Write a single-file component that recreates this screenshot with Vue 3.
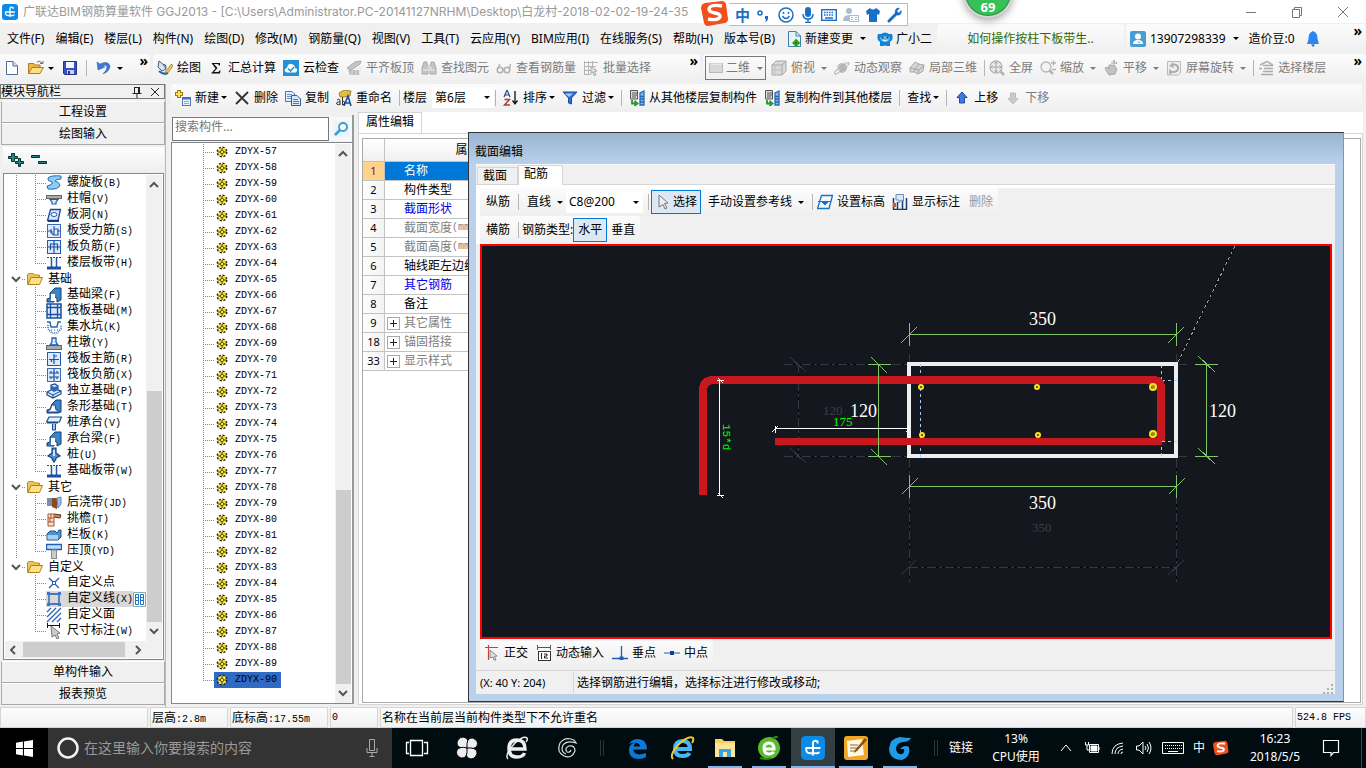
<script setup>
import { ref } from 'vue'

const icons = {
  app: '<rect width="16" height="16" rx="3" fill="#0b8ae6"/><path d="M11 5V3.500Q9 2.500 8 4V13M3 8H13M3.500 8Q3 11.500 6 11.500H11Q12 11.500 12 10.500" fill="none" stroke="#fff" stroke-width="1.300"/>',
  sogou: '<path d="M4 3L21 1Q24 1 25 4L27 19Q27 22 24 23L7 26Q4 26 3 23L0 8Q0 4 4 3Z" fill="#f2501b"/><path d="M21 6Q9 4 8 9Q8 12 14 13Q20 14 19 17Q17 21 7 19" fill="none" stroke="#fff" stroke-width="3.400"/>',
  punct: '<circle cx="4" cy="6" r="2" fill="none" stroke="#1a6fc4" stroke-width="1.500"/><path d="M9 9h3v3q0 2-3 3q1-2 1-3h-1z" fill="#1a6fc4"/>',
  smile: '<circle cx="8" cy="8" r="7" fill="none" stroke="#1a6fc4" stroke-width="1.500"/><path d="M4.500 9Q8 14 11.500 9M5.500 5v2M10.500 5v2" fill="none" stroke="#1a6fc4" stroke-width="1.500"/>',
  mic: '<rect x="5" y="0" width="6" height="10" rx="3" fill="#1a6fc4"/><path d="M3 7Q3 12 8 12Q13 12 13 7M8 12V15M5 15.500H11" fill="none" stroke="#1a6fc4" stroke-width="1.500"/>',
  keys: '<rect x=".7" y="2.700" width="14.600" height="10.600" fill="none" stroke="#1a6fc4" stroke-width="1.400"/><path d="M3 5.500H13M3 8H13" stroke="#1a6fc4" stroke-width="1.500" stroke-dasharray="1.500 1"/><path d="M4 11H12" stroke="#1a6fc4" stroke-width="1.500"/>',
  person: '<circle cx="6" cy="4" r="3" fill="#a9bdd3"/><path d="M0 14Q0 8 6 8Q9 8 10 9H6V14Z" fill="#a9bdd3"/><rect x="6.500" y="8.500" width="9" height="6" fill="#fff" stroke="#a9bdd3"/><path d="M8 10.500h2M12 10.500h2M8 12.500h2M12 12.500h2" stroke="#a9bdd3"/>',
  shirt: '<path d="M5 1L1 4L2 8L4 7V15H12V7L14 8L15 4L11 1Q8 4 5 1Z" fill="#1a6fc4"/>',
  wrench: '<path d="M2 14L9 7" stroke="#1a6fc4" stroke-width="3" stroke-linecap="round"/><path d="M14 3L12 6L10 4L13 1Q9 0 8 4Q7 8 11 8.500Q15 8 14.500 3.500Z" fill="#1a6fc4"/>',
  newdoc: '<path d="M2.500.5H10L14.500 5V15.500H2.500Z" fill="#e8f4fd" stroke="#3d7fae"/><path d="M10 .5V5H14.500" fill="none" stroke="#3d7fae"/><path d="M10 7.500L14.500 12L10 16L6 12Z" fill="#4fae1f"/><path d="M10 9V15M7 12H13" stroke="#1f7a0b"/>',
  robot: '<path d="M1 3L4 3Q8 0 12 3L15 3Q17 9 13 11V15H9L8 14L7 15H3V11Q-1 9 1 3Z" fill="#0f83d6"/><path d="M3 6Q8 4 13 6Q13 11 8 11Q3 11 3 6Z" fill="#5bb6f2"/><path d="M5.500 5.500V7.500M10.500 5.500V7.500" stroke="#053a70" stroke-width="1.500"/><path d="M5.500 9Q8 11 10.500 9" stroke="#fff" fill="none"/>',
  user: '<rect width="16" height="16" rx="2" fill="#4a9cd3"/><circle cx="8" cy="5.500" r="3" fill="#fff"/><path d="M3 13Q3 9 8 9Q13 9 13 13Z" fill="#fff"/><path d="M8 12L9 10L10 12Z" fill="#4a9cd3"/>',
  bell: '<path d="M8 0Q3 2 3.500 8L2 13H14L12.500 8Q13 2 8 0Z" fill="#2b87f0"/><path d="M6 13.500H10L8 16Z" fill="#1b5fb8"/>',
  doc: '<path d="M2.500 1.500H9L13.500 6V14.500H2.500Z" fill="#fdfefe" stroke="#4a6d9c"/><path d="M9 1.500V6H13.500" fill="#cfe0f3" stroke="#4a6d9c"/>',
  open: '<path d="M.5 13.500V3.500H6L7 5H12V8" fill="#e8b94a" stroke="#b07c1c"/><path d="M.5 13.500L4 7.500H15.500L12 13.500Z" fill="#ffdf80" stroke="#b07c1c"/><path d="M9 2Q12 0 14 3M12 3.500H15V1" fill="none" stroke="#5b7486"/>',
  save: '<path d="M1.500 1.500H14.500V14.500H2.500L1.500 13.500Z" fill="#3c4fc0" stroke="#28338c"/><rect x="4" y="2" width="8" height="6" fill="#f3f5ff"/><rect x="5" y="10" width="7" height="4" fill="#c9d0f2"/><rect x="6" y="11" width="2" height="3" fill="#28338c"/>',
  undo: '<path d="M2 2L3 10L10 7L7.500 6Q11 4 12 7Q12 10 8 14Q15 11 15 6Q13 0 5 4Z" fill="#3c78d4" stroke="#2a57a8" stroke-width=".5"/>',
  draw: '<path d="M2 1L7 5L9 9L5 11L1 7Z" fill="#d6e3f1" stroke="#3b5d85"/><path d="M6 5Q9 3 9 8" fill="none" stroke="#3b5d85"/><path d="M14.500 4L8 12L7 15L10 14L16 6Z" fill="#f4c542" stroke="#7a5d17" stroke-width=".6"/><path d="M2 11Q6 15 11 13" stroke="#2c66b8" stroke-width="2" fill="none"/>',
  sigma: '<path d="M3.500 3H12V5.500H11Q11 4 9 4H6L9.500 8L6 12H9.500Q11 12 11.500 10.500H12.500L12 13.500H3L7.500 8.500Z" fill="#111"/>',
  cloud: '<rect width="16" height="16" fill="#2391d8"/><path d="M4 12.500Q1 12 2 9Q3 8 4 8Q5 3 9 4Q12 5 12 8Q15 8.500 14 11Q13 12.500 12 12.500Z" fill="#fff"/><path d="M5 8.500L7.500 11L11 7" fill="none" stroke="#2391d8" stroke-width="1.600"/>',
  align: '<path d="M1 8L9 2L15 1L14 4L5 10Z" fill="#c5c5c5" stroke="#aaa"/><path d="M2 10H13V15H4Z" fill="#bbb"/><path d="M6 11V15M10 8V15M14 6V15" stroke="#e5e5e5"/>',
  binoc: '<path d="M3 2H6V5H7V14H1V8ZM10 2H13L15 8V14H9V5H10Z" fill="#c4c4c4" stroke="#a8a8a8"/><path d="M6 7H10V10H6M2 10H6M10 10H14" stroke="#eee" fill="none"/>',
  glasses: '<circle cx="4" cy="10" r="2.800" fill="none" stroke="#b0b0b0" stroke-width="1.500"/><circle cx="11" cy="10" r="2.800" fill="none" stroke="#b0b0b0" stroke-width="1.500"/><path d="M1.500 9L4 4M13.500 9L14.500 4M6.500 9.500H8.500" stroke="#b0b0b0" stroke-width="1.300"/>',
  batch: '<path d="M1.500 1V15M5.500 1V15M9.500 1V9M1 2.500H15M1 6.500H13M1 10.500H8M1 14.500H8" stroke="#b4b4b4" fill="none"/><path d="M8 6L14 11L11.500 11.500L13 15L11 15.500L10 12L8 13.500Z" fill="#ddd" stroke="#aaa"/>',
  flat: '<rect x="1.500" y="3.500" width="13" height="9" fill="#d8d8d8" stroke="#b8b8b8"/><path d="M2 4H14" stroke="#f3f3f3"/>',
  cube: '<path d="M1 5L5 1H15V11L11 15H1Z" fill="#d9d9d9" stroke="#a8a8a8"/><path d="M1 5H11V15M11 5L15 1" fill="none" stroke="#a8a8a8"/><path d="M4 5V15M1 10H11" stroke="#c1c1c1"/>',
  orbit: '<circle cx="8" cy="8" r="5" fill="#bdbdbd"/><path d="M1 14Q-1 11 8 6Q15 1 15 3Q15 6 8 10Q2 15 1 14Z" fill="none" stroke="#a5a5a5"/><path d="M10 1Q14 2 13 6M4 5Q3 9 6 13" stroke="#dedede" fill="none"/>',
  local: '<path d="M1 8L6 2L10 4L15 5L14 11L9 14L5 12L1 12Z" fill="#d5d5d5" stroke="#aaa"/><path d="M1 8L6 9L10 4M6 9L5 12M6 9L10 10L15 5M10 10L9 14" stroke="#a5a5a5" fill="none"/>',
  full: '<circle cx="7" cy="7" r="6" fill="#ececec" stroke="#b3b3b3" stroke-width="1.300"/><path d="M7 2V12M2 7H12M5.500 3.500L7 2L8.500 3.500M5.500 10.500L7 12L8.500 10.500M3.500 5.500L2 7L3.500 8.500M10.500 5.500L12 7L10.500 8.500" fill="none" stroke="#a4a4a4"/><path d="M11 11L15 15" stroke="#b3b3b3" stroke-width="2.500"/>',
  zoom: '<circle cx="6" cy="7" r="5" fill="#f3f3f3" stroke="#b8b8b8" stroke-width="1.300"/><path d="M9.500 10.500L13 14" stroke="#b3b3b3" stroke-width="2.500"/><path d="M11 3H16M13.500 .5V5.500M12 9.500H16" stroke="#b3b3b3" stroke-width="1.300"/>',
  pan: '<path d="M2 8L5 7L6 9V5L8 5L12 6L14 9L12 14L6 15L4 12Z" fill="#c2c2c2" stroke="#a9a9a9"/><path d="M11 0V6M8 3H14M10 1.500L11 0L12 1.500M13 2L14 3L13 4" stroke="#aaa" fill="none"/>',
  rotate: '<path d="M1.500 1.500H14.500V13L12 15H1.500Z" fill="#eee" stroke="#bbb"/><path d="M4 12Q13 13 12 7Q10 3 5 5" fill="none" stroke="#a8a8a8" stroke-width="1.800"/><path d="M7 2L3 6L8 8ZM3 9V15L8 12Z" fill="#b1b1b1"/>',
  floors: '<path d="M2 5L9 1.500L15 5M5 5.500H15M1 8.500H4M6 8.500H15M5 11.500H15M3 14.500H15" stroke="#ababab" stroke-width="1.400" fill="none"/>',
  create: '<path d="M4 0V8M0 4H8" stroke="#9a7a10" stroke-width="4"/><path d="M4 1V7M1 4H7" stroke="#ffe15a" stroke-width="2"/><rect x="7.500" y="7.500" width="8" height="8" fill="#eef4ff" stroke="#4c78bd"/><path d="M7.500 8.500H15.500" stroke="#3c6fc4" stroke-width="2"/><path d="M9 11.500H14M9 13.500H14" stroke="#8ca9d8"/>',
  remove: '<path d="M2 2L14 14M14 2L2 14" stroke="#333" stroke-width="1.800"/>',
  copy: '<path d="M.5 1.500H7L9.500 4V11.500H.5Z" fill="#e6effb" stroke="#4974b5"/><path d="M2 4.500H7M2 6.500H7M2 8.500H6" stroke="#6a95cf"/><path d="M6.500 5.500H12L15.500 9V15.500H6.500Z" fill="#dce9fb" stroke="#335da1"/><path d="M8 9.500H13M8 11.500H14M8 13.500H14" stroke="#4b7cc0"/>',
  rename: '<path d="M3 3L8 0L15 1L14 6L8 7L4 7Z" fill="#e9bd3c" stroke="#856213" stroke-width=".7"/><path d="M8 16L12 6L15 16M9.500 13H14" fill="none" stroke="#1c4fa6" stroke-width="1.600"/><path d="M1 10Q4 8 4 11V15M4 12Q0 11.500 0.700 14Q2 15.500 4 14M6.500 7V15Q9 15 8.500 12Q8 10.500 6.500 11.500" fill="none" stroke="#333"/>',
  sort: '<path d="M1 7L4 0L7 7M2 5H6" fill="none" stroke="#27488c" stroke-width="1.200"/><path d="M1.500 9.500H6.500L1.500 15H7" fill="none" stroke="#b23a3a" stroke-width="1.400"/><path d="M12 1V13M9.500 10.500L12 14L14.500 10.500" fill="none" stroke="#111" stroke-width="1.300"/>',
  filter: '<path d="M1 2H15L9.500 8V14L6.500 13V8Z" fill="#2f6fd0" stroke="#1d4d9c"/><path d="M3 3.500H11L7 7" fill="#a9cbf5"/>',
  floorcopy: '<path d="M1.500.5H8.500V9H1.500Z" fill="#ddd" stroke="#555"/><path d="M3 3H8M3 5H8M3 7H7" stroke="#555"/><path d="M15 1L11 3V15H15ZM11 6.500H15M11 9H15M11 12H15" fill="#8db9ea" stroke="#2769b3" stroke-width="1.300"/><path d="M3 10V13.500H7M5.500 11L8.500 13.500L5.500 16" stroke="#1c9a2a" stroke-width="1.800" fill="none"/>',
  up: '<path d="M8 2L13 7.500H10.500V13H5.500V7.500H3Z" fill="#3c7be0" stroke="#1d469c"/>',
  down: '<path d="M8 14L13 8.500H10.500V3H5.500V8.500H3Z" fill="#cacaca" stroke="#bdbdbd"/>',
  search: '<path d="M0 0H16V16H0Z" fill="#e9f4fc"/><circle cx="10" cy="6" r="4" fill="#fff" stroke="#3d97d3" stroke-width="1.800"/><path d="M7 9L2 14" stroke="#3d97d3" stroke-width="2.500"/>',
  folder: '<path d="M.5 13.500V3.500L2 2.500H6.500L7.500 4H12.500V7" fill="#f1c552" stroke="#b98a26"/><path d="M1 13.500L4 6.500H15.500L12.500 13.500Z" fill="#ffe08a" stroke="#b07f1f"/>',
  spiral: '<path d="M15 1Q5 0 2 3Q1 6 6 7Q8 9 1 11L2 14Q13 15 14 10Q13 7 9 6Q10 4 15 4Z" fill="#8ecbf5" stroke="#1f6fb8"/>',
  cap: '<rect x=".5" y="4.500" width="15" height="3" fill="#aaa" stroke="#666"/><path d="M4 8.500H12L10 11V13H6V11Z" fill="#dcebff" stroke="#1a5bb5" stroke-width="1.200"/>',
  hole: '<path d="M4.500 2.500H14.500L12 13.500H1.500Z" fill="#dbe9fb" stroke="#164a9d" stroke-width="1.300"/><ellipse cx="8" cy="7.500" rx="3" ry="2" fill="#fff" stroke="#1a5bb5"/><path d="M2 14H13" stroke="#123a7c" stroke-width="2"/>',
  slabS: '<rect x="1.500" y="1.500" width="13" height="13" fill="#e2ecfb" stroke="#3a6bb8"/><path d="M2 8H5M11 8H14M5 6V10M8 12Q5 11 6 8M8 3V12H12V6H8" fill="none" stroke="#2458a8" stroke-width="1.200"/>',
  slabF: '<rect x="1.500" y="1.500" width="13" height="13" fill="#dce9fb" stroke="#225ab0"/><path d="M8 2V14M4.500 11V5H11.500V11M2 8H14" fill="none" stroke="#1c4f9e" stroke-width="1.200"/>',
  band: '<path d="M1 2.500H15" stroke="#1c4f9e" stroke-dasharray="2 1"/><path d="M1 13H15" stroke="#1c4f9e" stroke-width="3"/><path d="M5.500 3V12M10.500 3V12" stroke="#2458a8" stroke-width="1.500"/>',
  beam: '<path d="M1 15V12L4 11V6L9 1L15 1V13L11 15V11L8 10V15Z" fill="#3c83c5" stroke="#0f3f80"/><path d="M5 7H9V14H5Z" fill="#fff"/>',
  raft: '<rect x="1" y="1" width="14" height="14" fill="#dce9fb" stroke="#1c4f9e" stroke-width="1.500"/><path d="M4.500 1V15M11.500 1V15M1 4.500H15M1 11.500H15" stroke="#1c4f9e" stroke-width="1.300"/>',
  pit: '<path d="M1 3H4L5 8H11L12 3H15" fill="none" stroke="#2563b3" stroke-width="1.400"/><path d="M2 6V10L6 14H11L15 10V6" fill="none" stroke="#2563b3" stroke-dasharray="1 1" stroke-width="1.600"/><path d="M5 11H12" stroke="#2563b3" stroke-dasharray="1 2"/>',
  pier: '<rect x=".5" y="10.500" width="15" height="4" fill="#aaa" stroke="#666"/><path d="M4 10L6 7V3H10V7L12 10Z" fill="#dcebff" stroke="#1a5bb5" stroke-width="1.300"/>',
  rebar: '<rect x="1.500" y="1.500" width="13" height="13" fill="#dce9fb" stroke="#225ab0"/><path d="M3 8.500H13M5.500 8V11M8 3V13M8 5H11" fill="none" stroke="#1c4f9e" stroke-width="1.200"/>',
  rebarX: '<rect x="1.500" y="1.500" width="13" height="13" fill="#dce9fb" stroke="#3a6bb8"/><path d="M8 2V14M3 6H13M3 10H13M5 4V6M11 4V6M5 10V12M11 10V12" stroke="#1c4f9e" stroke-width="1.200"/>',
  found: '<path d="M5 2L9 1L12 3V7L15 8V11L7 15L1 12V9L5 7Z" fill="#d8e8fa" stroke="#14498f" stroke-width="1.200"/><path d="M8 4V9L12 7V3ZM5 2L8 4V9L5 7Z" fill="#2b6cb5"/><path d="M1 9L7 12L15 8M7 12V15" fill="none" stroke="#14498f"/>',
  strip: '<path d="M1 14V11L4 10L6 5L10 1H15V13L12 14Z" fill="#3c83c5" stroke="#0f3f80"/><path d="M2 13V11H4L6 6H9L10 11H12V13Z" fill="#fff" stroke="#14498f"/>',
  pile: '<path d="M3 2H15.500L13.500 7H.5Z" fill="#e3effc" stroke="#14498f" stroke-width="1.200"/><path d="M1 7H12V8.500H1Z" fill="#14498f"/><path d="M6.500 9V15H9.500V9" fill="#9cc5ef" stroke="#14498f"/>',
  stake: '<path d="M6 1H10V6L14 9L10 11V12L8 15L6 12V11L2 9L6 6Z" fill="#4d8fd0" stroke="#0f4186" stroke-width="1.200"/><path d="M8 3V9" stroke="#fff" stroke-width="1.500"/>',
  pour: '<rect x="1" y="3" width="5" height="8" fill="#7b8fa8"/><path d="M6 3H11V14L6 12Z" fill="#8a4a23"/><path d="M11 3L15 2V9L12 13Z" fill="#9cc1ea" stroke="#5f86b4"/>',
  eave: '<path d="M2 3H8V15H2ZM2 7H8M2 11H8M5 3V7M4 7V11" fill="#f9e0d0" stroke="#a9522b"/><path d="M8 3L15 4L14 7L8 6" fill="#c98a66" stroke="#613217"/>',
  rail: '<path d="M1 7L4 4H9L11 6L13 3H15V10L12 13H1Z" fill="#4b94cf" stroke="#1a5487"/><path d="M1.500 8H12V12.500H1.500Z" fill="#a9d1ee"/>',
  top: '<path d="M.5 1.500H15.500V6.500H.5Z" fill="#bfe0ff" stroke="#1c5fb2" stroke-width="1.300"/><rect x="5.500" y="7" width="5" height="8.500" fill="#ccc" stroke="#888"/>',
  point: '<path d="M3 3L13 13M13 3L3 13" stroke="#2060b4" stroke-width="1.300"/><path d="M6 6H10V10H6Z" fill="#2060b4"/><path d="M7 7H9V9H7Z" fill="#fff"/>',
  line: '<path d="M3 3H13V13H3Z" fill="none" stroke="#1c57b0" stroke-width="1.300"/><path d="M1 1H4V4H1ZM12 1H15V4H12ZM1 12H4V15H1ZM12 12H15V15H12Z" fill="#3a76cc"/>',
  face: '<path d="M1 5L5 1M1 10L10 1M1 15L15 1M6 15L15 6M11 15L15 11" stroke="#2b62b5" stroke-width="1.300"/>',
  measure: '<path d="M1.500 0V5M13.500 0V5M1 2.500H14" stroke="#111"/><path d="M5 3L14 10L11 11L13 15L11 16L9 12L6 14Z" fill="#ccc" stroke="#777"/>',
  gear: '<circle cx="6" cy="6" r="4.500" fill="#ffee2c" stroke="#222" stroke-width="2" stroke-dasharray="2 1.530"/><circle cx="6" cy="6" r="3.300" fill="none" stroke="#ffee2c" stroke-width="1.200"/><path d="M6 2V10M2 6H10" stroke="#333" stroke-width="1"/><circle cx="6" cy="6" r="1.700" fill="#ffee2c" stroke="#333" stroke-width=".8"/>',
  select: '<path d="M4 1L13 9L9.500 9.500L12 14L10 15L8 10.500L4 13Z" fill="#eee" stroke="#777"/>',
  level: '<path d="M4.500 1.500H15.500L12 14.500H.5Z" fill="none" stroke="#1773c7" stroke-width="1.300"/><path d="M1 7.500H14M5 8L8 11L11 8Z" fill="#1773c7" stroke="#1773c7"/>',
  note: '<path d="M1.500 4V15.500H14.500V4M5.500 8V15M10.500 7V15" fill="none" stroke="#153f72" stroke-width="1.500"/><path d="M4 .5H11.500V7L9 6L7 9V6H4Z" fill="#dbe8f8" stroke="#6c8db5"/><path d="M1 9H4V13H1Z" fill="#d3562f"/>',
  ortho: '<path d="M1 2.500H14M4.500 0V15" stroke="#c2423c" stroke-width="1.200"/><path d="M6 5L13 11L10.500 11.500L12 15L10 15L9 12L6 13Z" fill="#ddd" stroke="#888"/>',
  dyn: '<path d="M1 2.500H15M1.500 0V5M14.500 0V5" stroke="#555"/><rect x="2.500" y="6.500" width="12" height="9" fill="#fff" stroke="#333"/><path d="M5.500 8V14M8 9H11V11H8.500V13H12" fill="none" stroke="#222"/>',
  perp: '<path d="M0 13.500H16M9.500 1V13" stroke="#1d5eb0" stroke-width="1.300"/><path d="M7.500 11.500H11.500V15H7.500Z" fill="#1d5eb0"/>',
  mid: '<path d="M0 8H16" stroke="#1d5eb0"/><path d="M6 6H10V10H6Z" fill="#0b3e8c"/>',
}

const menus = ['文件(F)', '编辑(E)', '楼层(L)', '构件(N)', '绘图(D)', '修改(M)', '钢筋量(Q)', '视图(V)', '工具(T)', '云应用(Y)', 'BIM应用(I)', '在线服务(S)', '帮助(H)', '版本号(B)']
const drawTools = [
  { i: 'draw', t: '绘图' }, { i: 'sigma', t: '汇总计算' }, { i: 'cloud', t: '云检查' },
  { i: 'align', t: '平齐板顶', off: true }, { i: 'binoc', t: '查找图元', off: true },
  { i: 'glasses', t: '查看钢筋量', off: true }, { i: 'batch', t: '批量选择', off: true },
]
const viewTools = [
  { i: 'flat', t: '二维', menu: true, boxed: true }, { i: 'cube', t: '俯视', menu: true }, { i: 'orbit', t: '动态观察' }, { i: 'local', t: '局部三维' },
  { sep: true },
  { i: 'full', t: '全屏' }, { i: 'zoom', t: '缩放', menu: true }, { i: 'pan', t: '平移', menu: true }, { i: 'rotate', t: '屏幕旋转', menu: true },
  { sep: true }, { i: 'floors', t: '选择楼层' },
]
const compTools = [{ i: 'create', t: '新建', menu: true }, { i: 'remove', t: '删除' }, { i: 'copy', t: '复制' }, { i: 'rename', t: '重命名' }, { sep: true }]
const compTools2 = [
  { sep: true }, { i: 'sort', t: '排序', menu: true }, { i: 'filter', t: '过滤', menu: true }, { sep: true },
  { i: 'floorcopy', t: '从其他楼层复制构件' }, { i: 'floorcopy', t: '复制构件到其他楼层' }, { sep: true },
  { t: '查找', menu: true }, { sep: true }, { i: 'up', t: '上移' }, { i: 'down', t: '下移', off: true },
]

const tree = [
  { items: [['spiral', '螺旋板', '(B)'], ['cap', '柱帽', '(V)'], ['hole', '板洞', '(N)'], ['slabS', '板受力筋', '(S)'], ['slabF', '板负筋', '(F)'], ['band', '楼层板带', '(H)']] },
  { name: '基础', items: [['beam', '基础梁', '(F)'], ['raft', '筏板基础', '(M)'], ['pit', '集水坑', '(K)'], ['pier', '柱墩', '(Y)'], ['rebar', '筏板主筋', '(R)'], ['rebarX', '筏板负筋', '(X)'], ['found', '独立基础', '(P)'], ['strip', '条形基础', '(T)'], ['pile', '桩承台', '(V)'], ['beam', '承台梁', '(F)'], ['stake', '桩', '(U)'], ['band', '基础板带', '(W)']] },
  { name: '其它', items: [['pour', '后浇带', '(JD)'], ['eave', '挑檐', '(T)'], ['rail', '栏板', '(K)'], ['top', '压顶', '(YD)']] },
  { name: '自定义', last: true, items: [['point', '自定义点', ''], ['line', '自定义线', '(X)', true], ['face', '自定义面', ''], ['measure', '尺寸标注', '(W)']] },
]
const components = Array.from({ length: 34 }, (_, k) => 'ZDYX-' + (57 + k))
const selected = ref('ZDYX-90')

const props = [
  { n: 1, t: '名称', cls: 'current' }, { n: 2, t: '构件类型' }, { n: 3, t: '截面形状', cls: 'blue' },
  { n: 4, t: '截面宽度', u: '(mm)', cls: 'gray' }, { n: 5, t: '截面高度', u: '(mm)', cls: 'gray' }, { n: 6, t: '轴线距左边线距离' },
  { n: 7, t: '其它钢筋', cls: 'blue' }, { n: 8, t: '备注' }, { n: 9, t: '其它属性', cls: 'gray', plus: true },
  { n: 18, t: '锚固搭接', cls: 'gray', plus: true }, { n: 33, t: '显示样式', cls: 'gray', plus: true },
]
const snaps = [{ i: 'ortho', t: '正交' }, { i: 'dyn', t: '动态输入' }, { i: 'perp', t: '垂点' }, { i: 'mid', t: '中点' }]
const query = ref('')
const webQuery = ref('')
const bars = [[921, 387, 3], [922, 435, 3], [1037, 387, 3], [1038, 435, 3], [1153, 387, 4], [1153, 434, 4]]
</script>

<template>
  <div class="screen">
    <header class="title">
      <svg class="ico" viewBox="0 0 16 16" v-html="icons.app"></svg>
      <h1>广联达BIM钢筋算量软件 GGJ2013 - [C:\Users\Administrator.PC-20141127NRHM\Desktop\白龙村-2018-02-02-19-24-35</h1>
      <div class="winbtns">
        <button aria-label="最小化"><svg viewBox="0 0 12 12"><path d="M1 6.500H11" /></svg></button>
        <button aria-label="还原"><svg viewBox="0 0 12 12"><path d="M1.500 3.500H8.500V11.500H1.500ZM3.500 3V1.500H10.500V9.500H9" /></svg></button>
        <button aria-label="关闭"><svg viewBox="0 0 12 12"><path d="M1 1L11 11M11 1L1 11" /></svg></button>
      </div>
    </header>

    <div class="ime">
      <svg class="sogou" viewBox="0 0 28 27" v-html="icons.sogou"></svg>
      <div class="imebar">
        <b>中</b>
        <svg v-for="n in ['punct', 'smile', 'mic', 'keys', 'person', 'shirt', 'wrench']" :key="n" class="ico" viewBox="0 0 16 16" v-html="icons[n]"></svg>
      </div>
    </div>
    <div class="ball">69</div>

    <nav class="menubar">
      <div class="menus">
        <button v-for="m in menus" :key="m">{{ m }}</button>
        <button class="tool"><svg class="ico" viewBox="0 0 16 16" v-html="icons.newdoc"></svg>新建变更<i class="caret"></i></button>
        <button class="tool"><svg class="ico" viewBox="0 0 16 16" v-html="icons.robot"></svg>广小二</button>
      </div>
      <div class="panel tip"><a href="#">如何操作按柱下板带生..</a></div>
      <div class="panel account">
        <button class="tool"><svg class="ico" viewBox="0 0 16 16" v-html="icons.user"></svg>13907298339<i class="caret"></i></button>
        <span>造价豆:0</span>
        <svg class="ico" viewBox="0 0 16 16" v-html="icons.bell"></svg>
        <span class="more">»</span>
      </div>
    </nav>

    <div class="toolrow">
      <div class="panel files">
        <button aria-label="新建"><svg class="ico" viewBox="0 0 16 16" v-html="icons.doc"></svg></button>
        <button class="tool" aria-label="打开"><svg class="ico" viewBox="0 0 16 16" v-html="icons.open"></svg><i class="caret"></i></button>
        <button aria-label="保存"><svg class="ico" viewBox="0 0 16 16" v-html="icons.save"></svg></button>
        <i class="sep"></i>
        <button class="tool undo" aria-label="撤销"><svg class="ico" viewBox="0 0 16 16" v-html="icons.undo"></svg><i class="caret"></i></button>
        <span class="more">»</span>
      </div>
      <div class="panel draws">
        <button v-for="b in drawTools" :key="b.t" class="tool" :class="{ off: b.off }"><svg class="ico" viewBox="0 0 16 16" v-html="icons[b.i]"></svg>{{ b.t }}</button>
        <span class="more">»</span>
      </div>
      <div class="panel views">
        <template v-for="(b, k) in viewTools" :key="k">
          <i v-if="b.sep" class="sep"></i>
          <button v-else class="tool off" :class="{ boxed: b.boxed }"><svg class="ico" viewBox="0 0 16 16" v-html="icons[b.i]"></svg>{{ b.t }}<i v-if="b.menu" class="caret"></i></button>
        </template>
        <span class="more">»</span>
      </div>
    </div>

    <main class="body">
      <aside class="nav">
        <div class="navhead"><span>模块导航栏</span>
          <svg viewBox="0 0 12 12"><path d="M3.500 1.500H8.500M3.500 1V7M7.500 1V7M8.500 1V7M1.500 7.500H10.500M6 8V12" /></svg>
          <svg viewBox="0 0 12 12"><path d="M2 2L10 10M10 2L2 10" /></svg>
        </div>
        <button class="stack">工程设置</button>
        <button class="stack">绘图输入</button>
        <div class="navtools">
          <svg viewBox="0 0 40 16"><g fill="#1d8f8c" stroke="#0a2b2b"><path d="M3.500 1.500H6.500V4.500H9.500V6.500H6.500V9.500H3.500V6.500H.5V4.500H3.500ZM10.500 6.500H12.500V9.500H15.500V11.500H12.500V14.500H10.500V11.500H7.500V9.500H10.500ZM23.500 3.500H31.500V5.500H23.500ZM30.500 9.500H38.500V11.500H30.500Z" /></g></svg>
        </div>
        <div class="treebox">
          <div class="treemain">
            <ul class="tree">
              <template v-for="(g, gi) in tree" :key="gi">
                <li v-if="g.name" class="root">
                  <svg class="chev" viewBox="0 0 10 10"><path d="M1 3L5 7L9 3" /></svg><i class="dash"></i>
                  <svg class="ico" viewBox="0 0 16 16" v-html="icons.folder"></svg><span>{{ g.name }}</span>
                </li>
                <li v-for="(it, k) in g.items" :key="g.name + it[1]">
                  <i class="trunk" :class="{ blank: g.last }"></i>
                  <i class="branch" :class="{ end: k === g.items.length - 1 }"></i>
                  <span class="node" :class="{ on: it[3] }"><svg class="ico" viewBox="0 0 16 16" v-html="icons[it[0]]"></svg><span>{{ it[1] }}<span class="mono">{{ it[2] }}</span></span></span>
                  <svg v-if="it[3]" class="book" viewBox="0 0 13 15"><path d="M.5.5H12.500V14.500H.5Z" fill="#fff" stroke="#8aa" /><path d="M2.500 2.500H5.500V12.500H2.500ZM7.500 2.500H10.500V12.500H7.500ZM3 5.500H5M8 5.500H10M3 8.500H5M8 8.500H10" fill="none" stroke="#1b74c9" /></svg>
                </li>
              </template>
            </ul>
            <div class="vscroll nav-v">
              <svg viewBox="0 0 10 10"><path d="M1 7L5 3L9 7" /></svg><i class="thumb"></i><svg viewBox="0 0 10 10"><path d="M1 3L5 7L9 3" /></svg>
            </div>
          </div>
          <div class="hscroll"><svg viewBox="0 0 10 10"><path d="M7 1L3 5L7 9" /></svg><i class="thumb"></i><svg viewBox="0 0 10 10"><path d="M3 1L7 5L3 9" /></svg></div>
        </div>
        <button class="stack">单构件输入</button>
        <button class="stack">报表预览</button>
      </aside>

      <section class="work">
        <div class="panel comps">
          <template v-for="(b, k) in compTools" :key="k">
            <i v-if="b.sep" class="sep"></i>
            <button v-else class="tool"><svg class="ico" viewBox="0 0 16 16" v-html="icons[b.i]"></svg>{{ b.t }}<i v-if="b.menu" class="caret"></i></button>
          </template>
          <label class="combo">楼层<span><select><option>第6层</option></select><i class="caret"></i></span></label>
          <template v-for="(b, k) in compTools2" :key="k">
            <i v-if="b.sep" class="sep"></i>
            <button v-else class="tool" :class="{ off: b.off }"><svg v-if="b.i" class="ico" viewBox="0 0 16 16" v-html="icons[b.i]"></svg>{{ b.t }}<i v-if="b.menu" class="caret"></i></button>
          </template>
        </div>
        <div class="cols">
          <div class="complist">
            <div class="find">
              <input v-model="query" placeholder="搜索构件..." aria-label="搜索构件">
              <button aria-label="搜索"><svg class="ico" viewBox="0 0 16 16" v-html="icons.search"></svg></button>
            </div>
            <div class="listbox">
              <ul>
                <li v-for="(c, k) in components" :key="c" @click="selected = c">
                  <i class="branch" :class="{ end: k === components.length - 1 }"></i>
                  <span class="item mono" :class="{ on: c === selected }"><svg viewBox="0 0 12 12" v-html="icons.gear"></svg>{{ c }}</span>
                </li>
              </ul>
              <div class="vscroll list-v">
                <svg viewBox="0 0 10 10"><path d="M1 7L5 3L9 7" /></svg><i class="thumb"></i><svg viewBox="0 0 10 10"><path d="M1 3L5 7L9 3" /></svg>
              </div>
            </div>
          </div>
          <div class="prop">
            <button class="proptab">属性编辑</button>
            <div class="propbody">
              <div class="gridbox">
                <table>
                  <colgroup><col class="c1"><col class="c2"><col></colgroup>
                  <thead><tr><th></th><th>属性名称</th><th>属性值</th></tr></thead>
                  <tbody>
                    <tr v-for="p in props" :key="p.n" :class="p.cls">
                      <th>{{ p.n }}</th>
                      <td><div class="pname"><button v-if="p.plus" class="plus" aria-label="展开"></button><span v-else class="pad"></span>{{ p.t }}<span v-if="p.u" class="mono">{{ p.u }}</span></div></td>
                      <td></td>
                    </tr>
                  </tbody>
                </table>
              </div>
            </div>
          </div>
        </div>

        <section class="dialog" role="dialog" aria-label="截面编辑">
          <h2>截面编辑</h2>
          <div class="dlgbody">
            <div class="tabs"><button>截面</button><button class="on">配筋</button></div>
            <div class="dlgtools">
              <div class="panel drow">
                <button>纵筋</button><i class="sep"></i>
                <button class="tool">直线<i class="caret"></i></button>
                <span class="combo2"><select aria-label="钢筋信息"><option>C8@200</option></select><i class="caret"></i></span>
                <i class="sep"></i>
                <button class="tool active"><svg class="ico" viewBox="0 0 16 16" v-html="icons.select"></svg>选择</button>
                <button class="tool">手动设置参考线<i class="caret"></i></button>
                <i class="sep"></i>
                <button class="tool lvl"><svg class="ico" viewBox="0 0 16 16" v-html="icons.level"></svg>设置标高</button>
                <button class="tool"><svg class="ico" viewBox="0 0 16 16" v-html="icons.note"></svg>显示标注</button>
                <button class="off">删除</button>
              </div>
              <div class="panel drow second">
                <button>横筋</button><i class="sep"></i><span>钢筋类型:</span>
                <button class="active">水平</button><button>垂直</button>
              </div>
            </div>
            <div class="canvas">
              <svg viewBox="482 246 848 391" preserveAspectRatio="xMinYMin slice">
                <g fill="none" shape-rendering="crispEdges">
                  <g stroke="#343a45">
                    <path stroke="#050608" d="M784 364.500H907M784 456.500H907M798.500 364V457M909.500 354V362M909.500 459V582M1176.500 354V362M1176.500 459V582M909 567.500H1177M1179 364.500H1187M1179 456.500H1187" />
                    <path stroke-dasharray="9 3 3 3" d="M784 364.500H907M784 456.500H907M798.500 364V457M909.500 354V362M909.500 459V582M1176.500 354V362M1176.500 459V582M909 567.500H1177M1179 364.500H1187M1179 456.500H1187" />
                    <path d="M790 357L806 372M790 448L806 463M901 575L916 560M1168 575L1184 560" />
                  </g>
                  <rect x="909" y="364" width="267" height="92" stroke="#eee" stroke-width="4" />
                  <path stroke="#a8c8ee" stroke-dasharray="3 3" d="M920.500 364V457M1161.500 365V380M1162 380.500H1177M1161.500 441V457M1162 441.500H1177" />
                  <path stroke="#050608" d="M1178 362L1235 246" /><path stroke="#9a9a9a" stroke-dasharray="3 3" d="M1178 362L1235 246" />
                  <path stroke="#c8171e" stroke-width="8" d="M703 495V391Q703 380 714 380H1153Q1161 380 1161 388V441" />
                  <path stroke="#c8171e" stroke-width="7" d="M775 441.500H1162" />
                  <path stroke="#80c468" d="M909 334.500H1177M909 486.500H1177M878.500 364V457M1206.500 364V457M909.500 323V346M1176.500 323V346M909.500 475V498M1176.500 475V498M868 364.500H891M868 456.500H891M1195 364.500H1218M1195 456.500H1218M901 343L917 327M1168 343L1184 327M902 494L918 478M1169 494L1185 478M871 357L887 373M871 449L887 465M1198 356L1215 372M1198 448L1215 464" />
                  <path stroke="#fff" d="M719.500 380V496M717 380.500H724M717 495.500H724M718 378L723 383M718 493L723 498M775 428.500H909M775.500 426V433M772 432L778 426M908.500 426V433M906 432L911 426" />
                </g>
                <g v-for="(b, k) in bars" :key="k"><circle :cx="b[0]" :cy="b[1]" :r="b[2] - 1" fill="#333" stroke="#ffe01a" stroke-width="2" /><path v-if="b[2] > 3" :d="`M${b[0] - 2} ${b[1] - 1}h4m-3 2h3`" stroke="#ffe01a" /></g>
                <g class="big"><text x="1029" y="325">350</text><text x="1029" y="509">350</text><text x="850" y="417">120</text><text x="1209" y="417">120</text></g>
                <g class="small"><text x="823" y="415">120</text><text x="1032" y="532">350</text><text class="green" x="833" y="426">175</text></g>
                <text class="vert" transform="translate(723 424) rotate(90)">15*d</text>
              </svg>
            </div>
            <div class="panel drow snaps">
              <button v-for="s in snaps" :key="s.t" class="tool"><svg class="ico" viewBox="0 0 16 16" v-html="icons[s.i]"></svg>{{ s.t }}</button>
            </div>
            <div class="dlgstatus"><span class="pos">(X: 40 Y: 204)</span><span>选择钢筋进行编辑，选择标注进行修改或移动;</span>
              <svg viewBox="0 0 12 12"><path d="M10 2h2v2h-2zM6 6h2v2h-2zM10 6h2v2h-2zM2 10h2v2h-2zM6 10h2v2h-2zM10 10h2v2h-2z" fill="#b0b0b0" /></svg>
            </div>
          </div>
        </section>
      </section>
    </main>

    <footer class="status">
      <span class="s1"></span>
      <span class="s2">层高<span class="mono">:2.8m</span></span>
      <span class="s3">底标高<span class="mono">:17.55m</span></span>
      <span class="s4 mono">0</span>
      <span class="s5">名称在当前层当前构件类型下不允许重名</span>
      <span class="s6 mono">524.8 FPS</span>
    </footer>

    <div class="taskbar">
      <button class="start" aria-label="开始"><svg viewBox="0 0 16 16"><path d="M0 2.500L6.500 1.500V7.500H0ZM7.500 1.300L16 0V7.500H7.500ZM0 8.500H6.500V14.500L0 13.500ZM7.500 8.500H16V16L7.500 14.700Z" fill="#fff" /></svg></button>
      <label class="websearch">
        <svg class="ring" viewBox="0 0 24 24"><circle cx="12" cy="12" r="9.500" fill="none" stroke="#f2f2f2" stroke-width="2.500" /></svg>
        <input v-model="webQuery" placeholder="在这里输入你要搜索的内容" aria-label="搜索">
        <svg class="micr" viewBox="0 0 12 20"><path d="M3.500 1.500H8.500V12.500H3.500ZM1 10V14.500H11V10M6 15V19M3.500 18.500H8.500" fill="none" stroke="#aaa" /></svg>
      </label>
      <div class="apps first">
        <svg viewBox="0 0 26 26"><path d="M6.500 5.500H18.500V20.500H6.500ZM5 7.500H2.500V18.500H5M20 7.500H23.500V18.500H20" fill="none" stroke="#fff" stroke-width="1.300" /></svg>
        <svg viewBox="0 0 26 26"><g fill="#eee" stroke="#05090b"><path d="M13 13Q2 14 3 7Q6 0 12 3Q15 5 13 13Z" /><path d="M13 13Q12 2 19 3Q25 6 23 11Q20 15 13 13Z" /><path d="M13 13Q24 12 23 19Q20 26 14 23Q11 20 13 13Z" /><path d="M13 13Q14 24 7 23Q1 20 3 15Q6 11 13 13Z" /></g></svg>
        <svg viewBox="0 0 26 26"><path d="M7 14H21Q21 5 13 5Q5 5 5 13.500Q5 22 13 22Q19 22 20.500 18" fill="none" stroke="#eee" stroke-width="3.500" /><path d="M4 24Q0 20 11 8Q20 0 23 3Q24 5 22 7" fill="none" stroke="#eee" stroke-width="1.500" /></svg>
        <svg viewBox="0 0 26 26"><path d="M20 5Q11 1 6 8Q2 17 10 21Q18 24 21 16Q21 10 15 11Q10 13 13 17Q16 18 17 15M20 5L22 8Q13 5 9 10Q6 17 12 19" fill="none" stroke="#ddd" stroke-width="1.200" /></svg>
      </div>
      <i class="tsep"></i>
      <div class="apps main">
        <span><svg viewBox="0 0 26 26"><path d="M8 14.500H22Q22 4 13 4Q7 4 4 9Q8 7 12 8Q15 9 15 11.500H9Q9 8 12 7Q4 8 4 15Q4 24 14 24Q18 24 21 22V18Q10 22 8 14.500Z" fill="#0a7ad6" /></svg></span>
        <span><svg viewBox="0 0 26 26"><path d="M7 14H21Q21 6 13.500 6Q6 6 6 14Q6 21 13.500 21Q19 21 20.500 18" fill="none" stroke="#47b8ed" stroke-width="4" /><path d="M4 24Q0 20 10 9Q20 0 24 3Q25 5 23 8" fill="none" stroke="#f3c636" stroke-width="2" /></svg></span>
        <span class="run"><svg viewBox="0 0 26 26"><path d="M3 4H10L12 6H23V22H3Z" fill="#f6cf62" /><path d="M3 8H23V22H3Z" fill="#ffe597" /><path d="M7 22V14H19V22H15V17H11V22Z" fill="#36a4e6" /></svg></span>
        <span class="run"><svg viewBox="0 0 26 26"><circle cx="13" cy="13" r="11" fill="#5cba2e" /><path d="M9 14H18Q18 8 13 8Q8 8 8 13Q8 19 13 19Q16 19 18 17" fill="none" stroke="#fff" stroke-width="3" /><path d="M4 23Q10 25 15 23M17 4Q21 0 21 3" stroke="#2b8b1a" stroke-width="2" fill="none" /></svg></span>
        <span class="run cur"><svg viewBox="0 0 16 16" v-html="icons.app"></svg></span>
        <span class="run"><svg viewBox="0 0 26 26"><rect x="1" y="1" width="24" height="24" rx="3" fill="#f1a626" /><path d="M4 6L19 4L21 20L5 22Z" fill="#fff8e4" /><path d="M7 10H15M7 13H14M7 16H12" stroke="#8a6a2f" /><path d="M22 3L12 15L11 18L14 16L24 5Z" fill="#8b4f16" /></svg></span>
        <span class="run"><svg viewBox="0 0 26 26"><path d="M24 3Q22 7 16 7Q9 8 9 14Q10 20 15 19Q18 18 17 14H13Q17 9 22 12Q24 22 15 25Q3 25 2 14Q3 3 13 2Q19 3 24 3Z" fill="#1f9ae6" /></svg></span>
      </div>
      <i class="tsep"></i>
      <span class="links">链接</span>
      <span class="cpu">13%<br>CPU使用</span>
      <div class="tray">
        <svg viewBox="0 0 18 18"><path d="M4 12L9 6L14 12" /></svg>
        <svg viewBox="0 0 18 18"><path d="M6.500 5.500H15.500V13.500H6.500ZM16 8V11M2.500 3V6H5.500V3M4 6V11H6" /><path d="M8 7H14V12H8Z" fill="#fff" /></svg>
        <svg viewBox="0 0 18 18"><path d="M3 15Q3 5 14 4M6 15Q6 8 14 7M9 15Q9 11 14 10M12 15Q12 13 14 13" /></svg>
        <svg viewBox="0 0 18 18"><path d="M1.500 7V11H4L8 15V3L4 7ZM10 7Q12 9 10 11M12 5Q15 9 12 13M14 3Q18 9 14 15" /></svg>
        <svg class="kb" viewBox="0 0 24 18"><path d="M1.500 3.500H22.500V14.500H1.500Z" /><path d="M4 6.500H21M4 9.500H21" stroke-dasharray="1 1" /><path d="M7 12.500H17" /></svg>
        <span>中</span>
        <svg class="so" viewBox="0 0 28 27" v-html="icons.sogou"></svg>
      </div>
      <span class="clock">16:23<br>2018/5/5</span>
      <svg class="notif" viewBox="0 0 18 18"><path d="M1.500 1.500H16.500V13.500H11.500L9 16.500V13.500H1.500Z" fill="none" stroke="#fff" stroke-width="1.200" /></svg>
      <i class="edge"></i>
    </div>
  </div>
</template>

<style>
html, body { margin: 0; }
body { overflow-x: hidden; }
</style>

<style scoped>
.screen { position: relative; min-height: 100vh; display: flex; flex-direction: column; background: #f0f0f0; font: 12px/16px "Noto Sans", "Noto Sans CJK SC", sans-serif; color: #000; box-sizing: border-box; white-space: nowrap; }
.screen *, .screen *::before { box-sizing: border-box; }
button, input, select { font: inherit; color: inherit; border: 0; background: none; padding: 0; margin: 0; }
ul { list-style: none; margin: 0; padding: 0; }
h1, h2 { margin: 0; font-size: 12px; font-weight: 400; }
h1 { font-family: Inter, "Noto Sans CJK SC", sans-serif; }
svg { flex: none; display: block; }
.ico { width: 16px; height: 16px; }
.mono { font-family: "Liberation Mono", "Noto Sans CJK SC", monospace; font-size: 10px; }
.caret { flex: none; width: 0; height: 0; border: 3px solid transparent; border-top-color: currentColor; border-bottom: 0; }
.sep { flex: none; width: 1px; height: 16px; background: #b5b5b5; }
.more { font-weight: 700; font-size: 14px; line-height: 14px; align-self: flex-start; padding-right: 2px; }
.panel { display: flex; align-items: center; background: linear-gradient(#fcfcfc, #efefef); border-radius: 3px; }
.tool { display: flex; align-items: center; gap: 4px; }
.off { color: #7b7b7b; }

.title { display: flex; align-items: center; height: 23px; background: #fff; padding-left: 2px; gap: 5px; color: #999; }
.winbtns { margin-left: auto; display: flex; }
.winbtns button { width: 46px; height: 20px; display: grid; place-items: center; }
.winbtns button svg { width: 12px; height: 12px; fill: none; stroke: #777; }
.ime { position: absolute; left: 701px; top: 0; display: flex; z-index: 3; }
.sogou { width: 28px; height: 27px; }
.imebar { margin-top: 3px; height: 23px; width: 179px; border: 1px solid #a9c0d8; border-left: 0; background: #fff; display: flex; align-items: center; justify-content: space-between; padding: 0 4px 0 6px; color: #1a6fc4; }
.imebar b { font-size: 15px; }
.ball { position: absolute; left: 964px; top: -31px; width: 48px; height: 48px; border-radius: 50%; background: #35c158; border: 2px solid #2a8f45; outline: 2px solid #d5d5d5; outline-offset: -1px; box-shadow: 0 3px 8px #999; color: #fff; font-weight: 700; font-size: 13px; line-height: 14px; text-align: center; padding-top: 29px; z-index: 3; }

.menubar { display: flex; height: 30px; padding-top: 1px; }
.menus { width: 937px; display: flex; align-items: center; gap: 11px; padding-left: 7px; flex: none; }
.menus .tool { gap: 3px; }
.menus .caret { margin-left: 4px; }
.tip { width: 187px; flex: none; justify-content: center; margin-right: 2px; }
.tip a { color: #2f6b00; text-decoration: none; }
.account { flex: 1; gap: 10px; padding: 0 2px 0 4px; }
.account .caret { margin-left: 3px; }
.account .more, .views .more { margin-left: auto; }

.toolrow { display: flex; height: 29px; padding-top: 1px; gap: 3px; }
.files { width: 150px; flex: none; padding-left: 4px; gap: 8px; }
.files .tool { gap: 4px; }
.files .undo { gap: 6px; }
.files .more { margin-left: auto; }
.draws { width: 547px; flex: none; padding-left: 4px; gap: 7px; }
.draws .more { margin-left: auto; }
.views { flex: 1; padding: 0 2px; gap: 7px; }
.views .caret { margin-left: 2px; }
.views .sep + .tool { margin-left: -3px; }
.comps .tool .caret { margin-left: -2px; }
.views .boxed { height: 24px; border: 1px solid #777; padding: 0 2px; margin-right: -2px; gap: 2px; }
.views .boxed .caret { margin: 0 0 0 5px; }

.body { flex: 1; display: flex; padding-top: 2px; min-height: 0; }
.nav { width: 166px; flex: none; display: flex; flex-direction: column; margin-right: 5px; border-right: 1px solid #b8b8b8; padding-bottom: 2px; }
.navhead { display: flex; align-items: center; gap: 6px; height: 15px; border: 1px solid #777; margin-bottom: 2px; padding-right: 3px; }
.navhead span { flex: 1; }
.navhead svg { width: 12px; height: 12px; fill: none; stroke: #222; }
.stack { height: 22px; flex: none; border: 1px solid #a9a9a9; border-top-color: #fff; background: #f0f0f0; margin: 0 0 0 1px; }
.navtools { height: 26px; flex: none; margin: 2px 1px 0 3px; background: linear-gradient(#fefefe, #eeeeee); padding: 5px; }
.navtools svg { width: 40px; height: 16px; }
.treebox { flex: 1; margin: 0 1px 1px 3px; border: 1px solid #828790; background: #fff; display: flex; flex-direction: column; padding: 1px 1px 1px; }
.treemain { flex: 1; display: flex; }
.tree { flex: 1; width: 0; }
.tree li { height: 16px; display: flex; align-items: center; }
.chev { width: 10px; height: 10px; margin-left: 6px; fill: none; stroke: #555; stroke-width: 2px; }
.dash { width: 4px; height: 1px; margin: 0 1px; background: repeating-linear-gradient(90deg, #888 0 1px, transparent 1px 2px); }
.root span { margin-left: 5px; }
.trunk { width: 19px; height: 16px; margin-left: 11px; flex: none; background: repeating-linear-gradient(#888 0 1px, transparent 1px 2px) 0 0 / 1px 100% no-repeat; }
.trunk.blank { background: none; }
.branch { width: 11px; height: 16px; flex: none; background: repeating-linear-gradient(#888 0 1px, transparent 1px 2px) 0 0 / 1px 100% no-repeat, repeating-linear-gradient(90deg, #888 0 1px, transparent 1px 2px) 0 8px / 100% 1px no-repeat; }
.branch.end { background-size: 1px 9px, 100% 1px; }
.node { display: flex; align-items: center; gap: 5px; height: 16px; }
.node.on { background: #d9d9d9; }
.book { width: 13px; height: 15px; }
.vscroll { width: 16px; flex: none; background: #f0f0f0; display: flex; flex-direction: column; align-items: center; padding: 5px 0; }
.vscroll svg, .hscroll svg { width: 10px; height: 10px; fill: none; stroke: #555; stroke-width: 2px; }
.thumb { background: #cdcdcd; }
.vscroll .thumb { width: 15px; }
.nav-v .thumb { flex: 234; margin: 201px 0 4px; }
.list-v .thumb { flex: 1; margin: 331px 0 4px; }
.hscroll { height: 17px; background: #f0f0f0; display: flex; align-items: center; padding: 0 3px; gap: 5px; }
.hscroll .thumb { width: 102px; height: 15px; margin-right: 3px; }

.work { flex: 1; position: relative; display: flex; flex-direction: column; min-width: 0; }
.comps { height: 27px; flex: none; padding-left: 4px; gap: 7px; margin-right: 4px; }
.combo { display: flex; align-items: center; gap: 5px; margin: 0 -6px 0 -4px; }
.combo span, .combo2 { display: flex; align-items: center; background: #fff; height: 21px; padding-right: 4px; }
select { appearance: none; background: transparent; }
.combo select { width: 52px; padding-left: 3px; }
.cols { flex: 1; display: flex; gap: 4px; }
.complist { width: 183px; flex: none; margin-top: 4px; display: flex; flex-direction: column; border-right: 2px solid #999; margin-bottom: 3px; }
.find { display: flex; height: 27px; padding: 2px 0 1px 1px; }
.find input { width: 157px; border: 1px solid #777; background: #fff; padding: 0 2px 4px; }
.find button { width: 24px; display: grid; place-items: center; background: #f8f8f8; }
input::placeholder { color: #777; opacity: 1; }
.listbox { flex: 1; border: 1px solid #828790; border-right: 0; background: #fff; display: flex; padding: 1px 1px 0 0; }
.listbox ul { flex: 1; padding-left: 31px; }
.listbox li { height: 16px; display: flex; }
.item { display: flex; align-items: center; gap: 7px; height: 16px; padding: 0 4px 0 2px; }
.item svg { width: 12px; height: 12px; }
.item.on { background: #316ac5; }
.prop { flex: 1; display: flex; flex-direction: column; background: #fff; margin: 1px 3px 2px 0; min-width: 0; }
.proptab { align-self: flex-start; height: 21px; padding: 0 7px 2px; background: #fff; border: 1px solid #d5d5d5; border-bottom: 0; }
.propbody { flex: 1; border: 1px solid #d5d5d5; padding: 4px 1px 1px 3px; display: flex; }
.gridbox { flex: 1; border: 1px solid #aaa; }
table { border-collapse: separate; border-spacing: 0; table-layout: fixed; width: 90%; }
.c1 { width: 22px; }
.c2 { width: 190px; }
th, td { height: 19px; padding: 0; border-right: 1px solid #c3c3c3; border-bottom: 1px solid #c3c3c3; line-height: 18px; font-weight: 400; }
thead th { height: 23px; background: linear-gradient(#fff, #f0f0f0); }
tbody th { background: linear-gradient(90deg, #fdfdfd, #f3f3f3); text-align: center; font-size: 11px; }
.pname { display: flex; align-items: center; height: 18px; }
.pad { width: 19px; }
.plus { width: 13px; height: 13px; margin: 0 4px 0 2px; border: 1px solid #aaa; background: linear-gradient(#222, #222) 2px 5px / 7px 1px no-repeat, linear-gradient(#222, #222) 5px 2px / 1px 7px no-repeat; }
.current td { background: #0078d7; color: #fff; }
.current th { background: #ffd28a; color: #7a007a; }
.blue td { color: #0000e8; }
.gray td { color: #808080; }

.dialog { position: absolute; left: 297px; right: 22px; top: 48px; bottom: 5px; display: flex; flex-direction: column; background: #b9d1ea; border: 1px solid #333; border-right-color: #29b6e8; padding: 0 8px 0 7px; z-index: 2; }
.dialog h2 { height: 31px; padding-top: 11px; margin: 0 -8px 0 -7px; padding-left: 6px; background: linear-gradient(#99b4d1, #b9d1ea); }
.dlgbody { flex: 1; margin-bottom: 7px; background: #f0f0f0; display: flex; flex-direction: column; border-top: 1px solid #f8f8f8; min-height: 0; }
.tabs { display: flex; align-items: flex-end; height: 20px; flex: none; border-bottom: 1px solid #d5d5d5; padding-left: 1px; }
.tabs button { height: 17px; width: 41px; padding: 1px 5px; line-height: 14px; border: 1px solid #d5d5d5; border-bottom: 0; text-align: left; }
.tabs .on { height: 20px; width: 45px; background: #fff; margin-bottom: -1px; padding-bottom: 4px; }
.dlgtools { border-top: 3px solid #fff; border-left: 4px solid #fff; height: 59px; flex: none; }
.drow { width: max-content; height: 28px; padding: 0 5px 0 6px; gap: 8px; }
.drow .tool .caret { margin: 0 1px 0 2px; }
.drow .off { margin-left: 2px; color: #999; }
.drow .active { height: 24px; border: 1px solid #0078d7; background: #dce9f4; padding: 0 4px; margin: 0 -4px; }
.drow .tool.active { padding: 0 3px; gap: 2px; margin-left: -6px; }
.drow .lvl { margin-left: -4px; }
.combo2 { margin: 0 -3px 0 -5px; }
.combo2 select { width: 67px; padding-left: 3px; }
.drow .sep ~ .tool { margin-right: -1px; }
.second .sep { margin-right: -5px; }
.second span { margin-right: -4px; }
.canvas { flex: 1; margin: 0 3px 0 4px; border: 2px solid #f00; background: #14171e; overflow: hidden; min-height: 0; }
.canvas svg { width: 100%; height: 100%; }
text { font-family: "Liberation Serif", serif; fill: #fff; }
.big text { font-size: 18px; }
.small text { font-size: 13px; fill: #3a404b; }
.small .green { fill: #0f0; }
.vert { font-family: "Liberation Mono", monospace; font-size: 11px; fill: #0f0; }
.snaps { height: 28px; flex: none; margin-left: 4px; padding-left: 4px; }
.dlgstatus { display: flex; height: 24px; flex: none; margin-top: 3px; border-top: 1px solid #d5d5d5; align-items: center; line-height: 21px; }
.pos { width: 98px; padding-left: 4px; margin-right: 3px; border-right: 1px solid #d5d5d5; font-size: 11px; }
.dlgstatus svg { width: 12px; height: 12px; margin: auto 2px 0 auto; }

.status { display: flex; gap: 2px; height: 21px; flex: none; }
.status > span { border: 1px solid #d5d5d5; background: linear-gradient(#fdfdfd, #f1f1f1); padding-left: 1px; line-height: 19px; }
.s1 { width: 148px; }
.s2 { width: 78px; }
.s3 { width: 98px; }
.s4 { width: 48px; }
.s5 { flex: 1; }
.s6 { width: 71px; }

.taskbar { display: flex; align-items: center; height: 40px; flex: none; background: #000c10; color: #fff; }
.start { width: 48px; height: 40px; display: grid; place-items: center; background: #000; }
.start svg { width: 17px; height: 17px; }
.websearch { width: 344px; height: 40px; background: #333; display: flex; align-items: center; padding: 0 14px 0 8px; gap: 4px; flex: none; }
.ring { width: 24px; height: 24px; }
.websearch input { flex: 1; min-width: 0; font-size: 14px; }
.websearch input::placeholder { color: #999; }
.micr { width: 12px; height: 20px; }
.apps { display: grid; align-items: center; justify-items: center; flex: none; }
.apps svg { width: 26px; height: 26px; }
.first { width: 200px; grid-template-columns: repeat(4, 1fr); }
.tsep { width: 4px; height: 16px; border: solid #2c3639; border-width: 0 1px; margin: 0 8px; flex: none; }
.main { width: 306px; grid-template-columns: repeat(7, 1fr); margin-left: 4px; }
.main span { width: 100%; height: 40px; display: grid; place-items: center; background: linear-gradient(#7fb6ec, #7fb6ec) center bottom / 0 2px no-repeat; }
.main .run { background-size: 34px 2px; }
.main .cur { background-color: #343f44; background-size: 100% 2px; }
.main .cur svg { width: 24px; height: 24px; }
.apps.main + .tsep { margin-left: 12px; }
.links { margin: 0 19px 0 3px; }
.cpu, .clock { text-align: center; line-height: 18px; }
.cpu { width: 48px; }
.tray { display: flex; justify-content: space-between; align-items: center; flex: none; width: 172px; margin-left: 17px; }
.tray svg { width: 18px; height: 18px; fill: none; stroke: #fff; }
.tray .kb { width: 24px; }
.tray .so { width: 16px; height: 16px; stroke: none; }
.clock { width: 52px; margin-left: 20px; }
.notif { width: 18px; height: 18px; margin: 0 auto; }
.edge { width: 1px; height: 40px; background: #444; margin-right: 4px; }
</style>
